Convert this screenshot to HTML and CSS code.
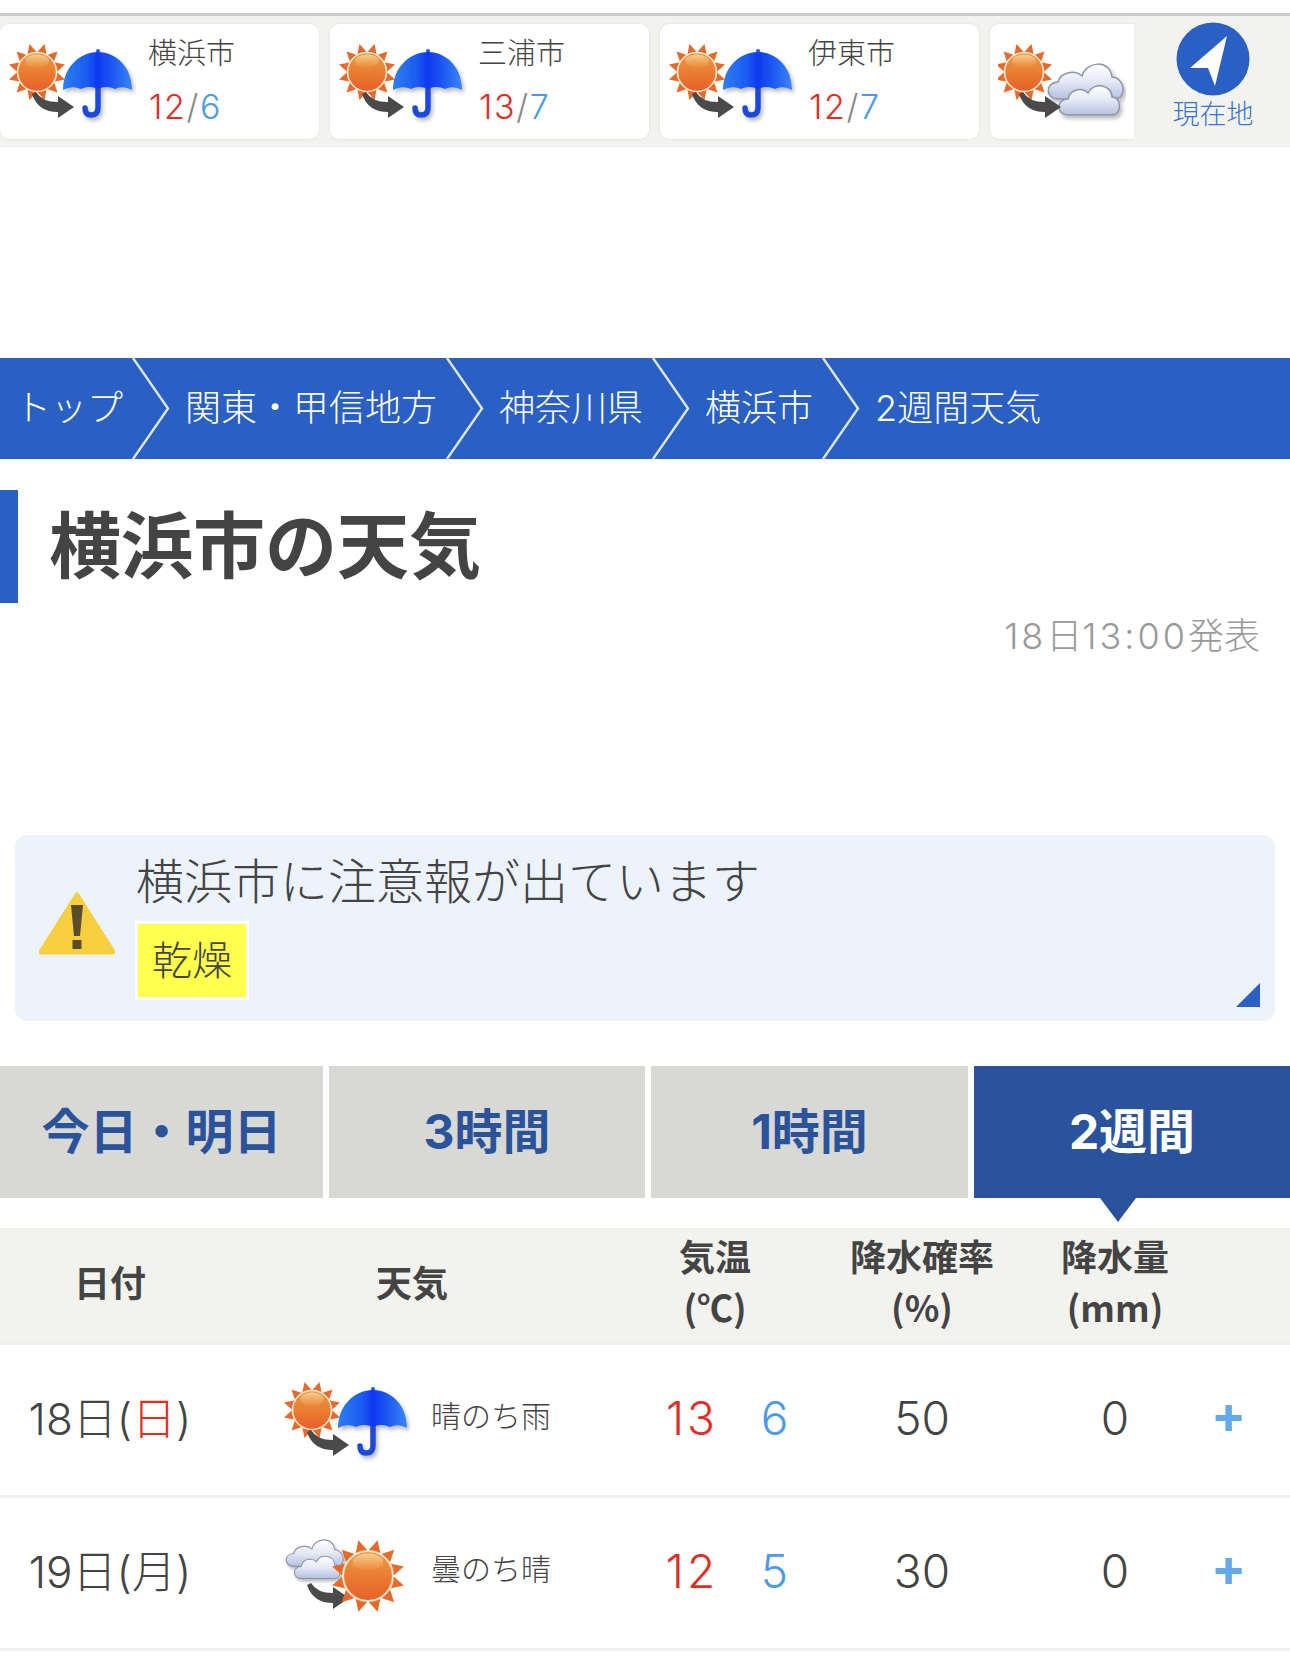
FILE: index.html
```html
<!DOCTYPE html>
<html lang="ja">
<head>
<meta charset="utf-8">
<title>横浜市の天気</title>
<link rel="stylesheet" href="styles.css">
</head>
<body>
<svg class="defs" width="0" height="0" aria-hidden="true">
  <defs>
    <linearGradient id="gSun" x1="0" y1="0" x2="0" y2="1">
      <stop offset="0" stop-color="#ee9a45"/><stop offset=".55" stop-color="#ea7a30"/><stop offset="1" stop-color="#e65f2b"/>
    </linearGradient>
    <linearGradient id="gHi" x1="0" y1="0" x2="0" y2="1">
      <stop offset="0" stop-color="#f6cf96"/><stop offset="1" stop-color="#f2a95c" stop-opacity=".2"/>
    </linearGradient>
    <linearGradient id="gUmb" x1="0" y1="0" x2="1" y2="0">
      <stop offset="0" stop-color="#2f7df2"/><stop offset=".35" stop-color="#1a5cf0"/><stop offset=".5" stop-color="#0d39f0"/><stop offset=".68" stop-color="#1a52f0"/><stop offset="1" stop-color="#3a86f4"/>
    </linearGradient>
    <linearGradient id="gCloud" x1="0" y1="0" x2="0" y2="1">
      <stop offset="0" stop-color="#ffffff"/><stop offset=".5" stop-color="#e4e9f6"/><stop offset="1" stop-color="#b4c0de"/>
    </linearGradient>
    <filter id="fShadow" x="-15%" y="-15%" width="135%" height="140%">
      <feDropShadow dx="2" dy="3" stdDeviation="2" flood-color="#000" flood-opacity=".28"/>
    </filter>
    <polygon id="ray" points="-5,-19 5,-19 0,-29" fill="#e8692a"/>
    <g id="sun">
      <use href="#ray" transform="rotate(15)"/><use href="#ray" transform="rotate(45)"/><use href="#ray" transform="rotate(75)"/>
      <use href="#ray" transform="rotate(105)"/><use href="#ray" transform="rotate(135)"/><use href="#ray" transform="rotate(165)"/>
      <use href="#ray" transform="rotate(195)"/><use href="#ray" transform="rotate(225)"/><use href="#ray" transform="rotate(255)"/>
      <use href="#ray" transform="rotate(285)"/><use href="#ray" transform="rotate(315)"/><use href="#ray" transform="rotate(345)"/>
      <circle r="19.500" fill="url(#gSun)" stroke="#fbe9cf" stroke-width="1.6"/>
      <ellipse cy="-11" rx="12" ry="6.5" fill="url(#gHi)"/>
    </g>
    <g id="umbrella" filter="url(#fShadow)">
      <path d="M90 46V66Q90 73 83 73Q77 73 77 66" fill="none" stroke="#1f4adc" stroke-width="5.500" stroke-linecap="round"/>
      <circle cx="90" cy="9" r="2" fill="#1f5ae8"/>
      <path d="M55 48C55 25 72 10 90 10C108 10 124 25 124 48Q115 43 107 47Q98 43 90 47Q81 43 73 47Q64 43 55 48Z" fill="url(#gUmb)"/>
    </g>
    <g id="cloud" filter="url(#fShadow)">
      <path d="M14 40C2 40 0 24 14 23C16 14 30 10 38 17C42 2 66 0 68 18C80 18 84 38 72 40Z" fill="url(#gCloud)" stroke="#8d96ab" stroke-width="1.5"/>
      <path d="M24 56C12 56 12 40 24 40C26 30 38 28 44 34C50 22 68 26 68 38C78 38 78 56 68 56Z" fill="url(#gCloud)" stroke="#8d96ab" stroke-width="1.5"/>
    </g>
    <path id="turn" d="M24 52L28 50Q34 60 50 60V54L66 65L50 76V70Q30 70 24 52Z" fill="#4a4a4a"/>
    <symbol id="sun-rain" viewBox="0 0 128 88">
      <use href="#sun" x="29" y="30"/><use href="#turn"/><use href="#umbrella"/>
    </symbol>
    <symbol id="sun-cloud" viewBox="0 0 128 88">
      <use href="#sun" x="26" y="30"/><use href="#cloud" x="46" y="17"/><use href="#turn" x="-3"/>
    </symbol>
    <symbol id="cloud-sun" viewBox="0 0 128 88">
      <use href="#cloud" transform="translate(0 3) scale(.76)"/>
      <use href="#turn"/>
      <use href="#sun" transform="translate(85 43) scale(1.28)"/>
    </symbol>
  </defs>
</svg>

<header class="strip">
  <div class="cities">
    <a class="city">
      <svg class="wx"><use href="#sun-rain"/></svg>
      <div class="city-info"><div class="city-name">横浜市</div><div class="city-temp"><span class="hi">12</span><span class="sl">/</span><span class="lo">6</span></div></div>
    </a>
    <a class="city">
      <svg class="wx"><use href="#sun-rain"/></svg>
      <div class="city-info"><div class="city-name">三浦市</div><div class="city-temp"><span class="hi">13</span><span class="sl">/</span><span class="lo">7</span></div></div>
    </a>
    <a class="city">
      <svg class="wx"><use href="#sun-rain"/></svg>
      <div class="city-info"><div class="city-name">伊東市</div><div class="city-temp"><span class="hi">12</span><span class="sl">/</span><span class="lo">7</span></div></div>
    </a>
    <a class="city">
      <svg class="wx"><use href="#sun-cloud"/></svg>
    </a>
  </div>
  <a class="here">
    <svg class="here-icon" viewBox="0 0 74 74"><circle cx="37" cy="37" r="36.5" fill="#2a60c4"/><polygon points="51,14 14,46 32,46 39,64" fill="#fff"/></svg>
    <span class="here-label">現在地</span>
  </a>
</header>

<div class="ad-top"></div>

<nav class="crumbs">
  <a class="crumb crumb-first">トップ</a>
  <svg class="chev" viewBox="0 0 38 101"><polyline points="1,0 36,50.5 1,101" fill="none" stroke="#dbe6f7" stroke-width="2.4"/></svg>
  <a class="crumb">関東・甲信地方</a>
  <svg class="chev" viewBox="0 0 38 101"><polyline points="1,0 36,50.5 1,101" fill="none" stroke="#dbe6f7" stroke-width="2.4"/></svg>
  <a class="crumb">神奈川県</a>
  <svg class="chev" viewBox="0 0 38 101"><polyline points="1,0 36,50.5 1,101" fill="none" stroke="#dbe6f7" stroke-width="2.4"/></svg>
  <a class="crumb">横浜市</a>
  <svg class="chev" viewBox="0 0 38 101"><polyline points="1,0 36,50.5 1,101" fill="none" stroke="#dbe6f7" stroke-width="2.4"/></svg>
  <a class="crumb">2週間天気</a>
</nav>

<h1 class="title">横浜市の天気</h1>
<p class="issued"><span class="dig">18</span>日<span class="dig">13:00</span>発表</p>

<div class="ad-mid"></div>

<section class="alert">
  <svg class="alert-icon" viewBox="0 0 76 64">
    <path d="M38 3L74 60H2Z" fill="#f6cf41" stroke="#f6cf41" stroke-width="5" stroke-linejoin="round"/>
    <path d="M32 13H44L41 44H35Z" fill="#5a4d2c"/>
    <rect x="33.500" y="48" width="9" height="9" fill="#5a4d2c"/>
  </svg>
  <div class="alert-body">
    <div class="alert-title">横浜市に注意報が出ています</div>
    <span class="tag">乾燥</span>
  </div>
  <span class="corner"></span>
</section>

<div class="tabs">
  <a class="tab">今日・明日</a>
  <a class="tab">3時間</a>
  <a class="tab">1時間</a>
  <a class="tab tab-active">2週間</a>
</div>

<section class="table">
  <div class="row row-head">
    <div class="cell">日付</div>
    <div class="cell">天気</div>
    <div class="cell">気温<br><span class="unit">(℃)</span></div>
    <div class="cell">降水確率<br><span class="unit">(%)</span></div>
    <div class="cell">降水量<br><span class="unit">(mm)</span></div>
    <div class="cell"></div>
  </div>
  <div class="row">
    <div class="cell date">18日(<span class="hi">日</span>)</div>
    <div class="cell weather"><svg class="wx"><use href="#sun-rain"/></svg><span class="wx-text">晴のち雨</span></div>
    <div class="cell temps"><span class="temp hi">13</span><span class="temp lo">6</span></div>
    <div class="cell num">50</div>
    <div class="cell num">0</div>
    <div class="cell plus">+</div>
  </div>
  <div class="row">
    <div class="cell date">19日(月)</div>
    <div class="cell weather"><svg class="wx"><use href="#cloud-sun"/></svg><span class="wx-text">曇のち晴</span></div>
    <div class="cell temps"><span class="temp hi">12</span><span class="temp lo">5</span></div>
    <div class="cell num">30</div>
    <div class="cell num">0</div>
    <div class="cell plus">+</div>
  </div>
</section>
</body>
</html>
```

FILE: styles.css
```css
* { box-sizing: border-box; }
html, body { margin: 0; padding: 0; height: 1667px; overflow: hidden; background: #fff; }
body { font-family: Inter, "Noto Sans CJK JP", "Noto Sans", sans-serif; font-weight: 300; color: #444; padding-top: 13px; }
.defs { display: block; width: 0; height: 0; overflow: hidden; }

.hi { color: #e52c24; }
.lo { color: #4a9bef; }
.sl { color: #888; }

.strip { display: flex; height: 134px; background: #f2f3ee; border-top: 3px solid #ccc; }
.cities { flex: 1; min-width: 0; display: flex; gap: 11px; overflow: hidden; padding-top: 8px; }
.city { flex: 0 0 319px; height: 115px; background: #fff; border-radius: 9px; box-shadow: 0 0 2px #d5d5d0; display: flex; align-items: flex-start; padding: 18px 0 0 8px; }
.wx { flex: 0 0 128px; width: 128px; height: 88px; display: block; }
.city-info { margin-left: 12px; margin-top: -18px; }
.city-name { font-size: 29px; line-height: 60px; color: #444; }
.city-temp { font-size: 34px; line-height: 46px; letter-spacing: 1.6px; padding-left: 1px; }

.here { flex: 0 0 156px; display: flex; flex-direction: column; align-items: center; padding: 6px 0 0 2px; }
.here-icon { width: 74px; height: 74px; display: block; }
.here-label { font-size: 27px; line-height: 34px; color: #3b74cc; margin-top: 2px; }

.ad-top { height: 211px; }

.crumbs { display: flex; height: 101px; background: #2a60c4; color: #fff; }
.crumb { font-size: 36px; line-height: 101px; padding: 0 9px 0 15px; white-space: nowrap; }
.crumb-first { padding-left: 15px; }
.chev { flex: 0 0 38px; width: 38px; height: 101px; display: block; }

.title { margin: 31px 0 0; height: 113px; border-left: 18px solid #2a60c4; padding-left: 31px; font-size: 72px; line-height: 111px; font-weight: 700; color: #444; }
.issued { margin: 8px 30px 0 0; text-align: right; font-size: 36px; line-height: 50px; color: #999; }
.dig { letter-spacing: 3px; }

.ad-mid { height: 174px; }

.alert { position: relative; margin: 0 15px; height: 186px; background: #edf3fd; border-radius: 12px; display: flex; align-items: flex-start; padding: 16px 0 0 24px; }
.alert-icon { flex: 0 0 76px; width: 76px; height: 64px; display: block; margin-top: 41px; }
.alert-body { margin-left: 21px; display: flex; flex-direction: column; align-items: flex-start; }
.alert-title { font-size: 48px; line-height: 62px; color: #444; }
.tag { margin: 8px 0 0 -1px; background: #ffff4d; border: 3px solid #fff; font-size: 40px; line-height: 73px; padding: 0 14px; color: #444; }
.corner { position: absolute; right: 15px; bottom: 14px; width: 0; height: 0; border-style: solid; border-width: 0 0 24px 24px; border-color: transparent transparent #2a60c4 transparent; }

.tabs { margin-top: 45px; display: grid; grid-template-columns: 323px 316px 317px 1fr; gap: 6px; height: 132px; }
.tab { position: relative; background: #d8d9d4; color: #2b539c; font-size: 48px; font-weight: 700; line-height: 132px; text-align: center; }
.tab-active { background: #2b529c; color: #fff; }
.tab-active::after { content: ""; position: absolute; left: 126px; top: 132px; border-style: solid; border-width: 24px 18px 0 18px; border-color: #2b529c transparent transparent transparent; }

.table { margin-top: 30px; }
.row { display: grid; grid-template-columns: 220px 384px 222px 192px 194px 78px; height: 153px; border-bottom: 3px solid #f0f0f0; align-items: center; }
.row-head { height: 117px; background: #f2f3ee; font-size: 36px; font-weight: 700; line-height: 48px; text-align: center; padding-bottom: 3px; }
.unit { font-family: "Noto Sans CJK JP", sans-serif; }
.date { font-size: 44px; text-align: center; color: #444; padding-bottom: 8px; }
.weather { display: flex; align-items: center; padding-left: 63px; }
.weather .wx { margin-top: 8px; }
.wx-text { margin-left: 20px; font-size: 30px; color: #444; padding-bottom: 12px; }
.temps { display: flex; padding: 0 0 4px 46px; }
.temp { flex: 0 0 84px; text-align: center; font-size: 46px; letter-spacing: 3px; }
.num { text-align: center; font-size: 46px; color: #444; padding-bottom: 4px; }
.plus { font-size: 52px; line-height: 52px; font-weight: 700; color: #62a9ee; padding: 0 0 10px; margin-left: -1px; }
```
